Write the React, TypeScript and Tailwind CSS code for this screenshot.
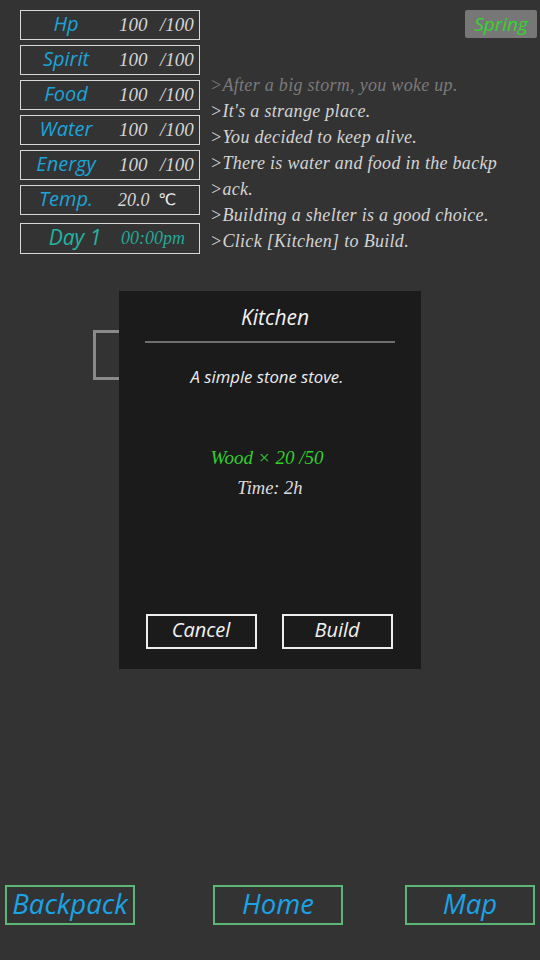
import React from 'react';

const sans = "font-['Open_Sans','Liberation_Sans',sans-serif] italic";
const serif = "font-['Liberation_Serif','DejaVu_Serif',serif] italic";

const stats = [
  { label: 'Hp', value: '100', max: '/100' },
  { label: 'Spirit', value: '100', max: '/100' },
  { label: 'Food', value: '100', max: '/100' },
  { label: 'Water', value: '100', max: '/100' },
  { label: 'Energy', value: '100', max: '/100' },
];

const logs = [
  { text: '>After a big storm, you woke up.', dim: true },
  { text: ">It's a strange place.", dim: false },
  { text: '>You decided to keep alive.', dim: false },
  { text: '>There is water and food in the backp', dim: false },
  { text: '>ack.', dim: false },
  { text: '>Building a shelter is a good choice.', dim: false },
  { text: '>Click [Kitchen] to Build.', dim: false },
];

const StatRow: React.FC<{ label: string; value: string; max: string }> = ({ label, value, max }) => (
  <div className="h-[30px] border border-[#d8d8d8] flex items-center">
    <span className={`${sans} w-[90px] text-center text-[20px] leading-none text-[#1ca3d8] -mt-[2px]`}>{label}</span>
    <span className={`${serif} w-[47px] text-[19px] text-[#d6d6d6] pl-[8px]`}>{value}</span>
    <span className={`${serif} text-[19px] text-[#d6d6d6] pl-[2px]`}>{max}</span>
  </div>
);

export default function App() {
  return (
    <div className="relative w-[540px] h-[960px] bg-[#333333] flex flex-col overflow-hidden">
      <div className="flex">
        <div className="ml-[20px] mt-[10px] w-[180px] flex flex-col gap-[5px]">
          {stats.map((s) => (
            <StatRow key={s.label} {...s} />
          ))}
          <div className="h-[30px] border border-[#d8d8d8] flex items-center">
            <span className={`${sans} w-[90px] text-center text-[20px] leading-none text-[#1ca3d8] -mt-[2px]`}>Temp.</span>
            <span className={`${serif} w-[45px] text-[18px] text-[#d6d6d6] pl-[7px]`}>20.0</span>
            <span className="font-['DejaVu_Sans',sans-serif] text-[16px] text-[#eeeeee] pl-[2px]">℃</span>
          </div>
          <div className="mt-[3px] h-[31px] border border-[#d8d8d8] flex items-center">
            <span className={`${sans} w-[100px] text-center text-[21px] leading-none text-[#22b5a0] pl-[8px] -mt-[2px]`}>Day 1</span>
            <span className={`${serif} text-[18px] text-[#22a896]`}>00:00pm</span>
          </div>
        </div>
        <div className="flex-1 flex flex-col ml-[10px]">
          <div className="flex justify-end mt-[10px] mr-[3px]">
            <div className={`${sans} h-[28px] w-[72px] bg-[#777777] rounded-[2px] text-[#33d62a] text-[19px] flex items-center justify-center`}>
              Spring
            </div>
          </div>
          <div className="mt-[34px] flex flex-col">
            {logs.map((l, i) => (
              <div
                key={i}
                className={`${serif} h-[26px] leading-[26px] text-[18px] tracking-[0.3px] whitespace-nowrap ${l.dim ? 'text-[#7a7a7a]' : 'text-[#d4d4d4]'}`}
              >
                {l.text}
              </div>
            ))}
          </div>
        </div>
      </div>

      {/* building button behind the dialog */}
      <div className="ml-[93px] mt-[76px] w-[70px] h-[50px] border-[3px] border-[#8a8a8a]" />

      <div className="mt-auto mb-[35px] flex items-center">
        <button className={`${sans} ml-[5px] w-[130px] h-[40px] border-2 border-[#5cb676] text-[#1aa3e6] text-[27.5px] leading-none flex items-center justify-center pb-[3px]`}>
          Backpack
        </button>
        <button className={`${sans} ml-[78px] w-[130px] h-[40px] border-2 border-[#5cb676] text-[#1aa3e6] text-[27.5px] leading-none flex items-center justify-center pb-[3px]`}>
          Home
        </button>
        <button className={`${sans} ml-[62px] w-[130px] h-[40px] border-2 border-[#5cb676] text-[#1aa3e6] text-[27.5px] leading-none flex items-center justify-center pb-[3px]`}>
          Map
        </button>
      </div>

      {/* dialog */}
      <div className="absolute left-[119px] top-[291px] w-[302px] h-[378px] bg-[#1b1b1b] flex flex-col items-center">
        <div className={`${sans} mt-[11px] pl-[10px] text-[21px] text-[#f2f2f2]`}>Kitchen</div>
        <div className="mt-[7px] w-[250px] h-[2px] bg-[#6e6e6e]" />
        <div className={`${sans} mt-[21px] pr-[6px] text-[16.7px] text-[#eeeeee]`}>A simple stone stove.</div>
        <div className={`${serif} mt-[55px] pr-[6px] text-[19px] text-[#2ed02a]`}>Wood × 20 /50</div>
        <div className={`${serif} mt-[3px] text-[18.5px] text-[#dddddd]`}>Time: 2h</div>
        <div className="mt-auto mb-[20px] mr-[2px] flex gap-[25px]">
          <button className={`${sans} w-[111px] h-[35px] border-2 border-[#eeeeee] text-[20px] text-[#f2f2f2] flex items-center justify-center pb-[3px]`}>
            Cancel
          </button>
          <button className={`${sans} w-[111px] h-[35px] border-2 border-[#eeeeee] text-[20px] text-[#f2f2f2] flex items-center justify-center pb-[3px]`}>
            Build
          </button>
        </div>
      </div>
    </div>
  );
}
